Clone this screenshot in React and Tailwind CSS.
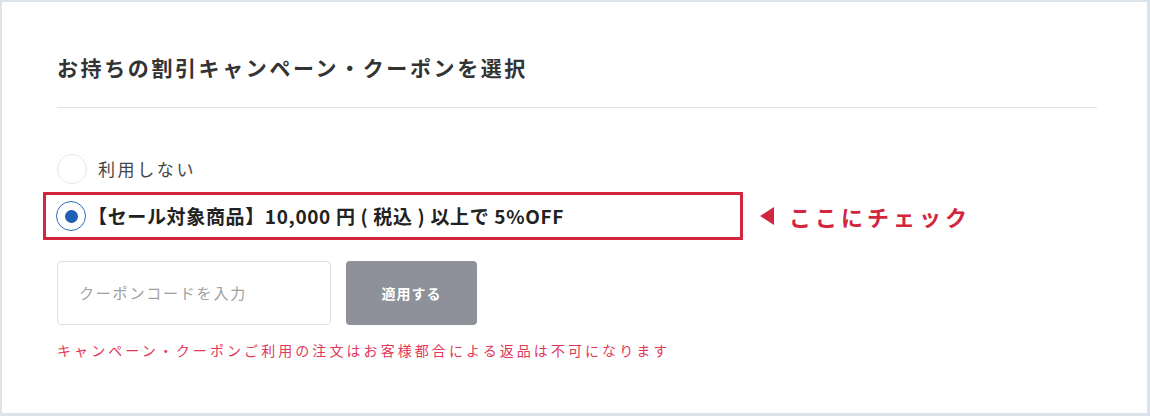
export default function App() {
  const font = { fontFamily: '"Noto Sans CJK JP", "Noto Sans", sans-serif' };
  return (
    <div
      style={font}
      className="w-[1150px] h-[416px] bg-white border-solid border-[#dce3eb] border-t-2 border-l-2 border-r-[3px] border-b-[3px] pl-[55px] pr-[50px] pt-[51px]"
    >
      <h2 className="text-[21px] leading-[28px] font-bold tracking-[2.6px] text-[#333]">
        お持ちの割引キャンペーン・クーポンを選択
      </h2>
      <div className="mt-[26px] h-px bg-[#dfe3e8]" />

      <div className="mt-[46px] flex items-center h-[30px]">
        <span className="w-[30px] h-[30px] rounded-full border border-[#e3e6ea] bg-white shrink-0" />
        <span className="ml-[11px] text-[17px] leading-[24px] tracking-[2.6px] text-[#444]">利用しない</span>
      </div>

      <div className="mt-[8px] flex items-center">
        <div className="ml-[-14px] w-[700px] h-[48px] border-[3px] border-[#d4253f] flex items-center pl-[10px]">
          <span className="w-[30px] h-[30px] rounded-full border border-[#2e6bb8] bg-white shrink-0 flex items-center justify-center">
            <span className="w-[13px] h-[13px] rounded-full bg-[#1f5fb4]" />
          </span>
          <span className="ml-[2px] text-[19px] leading-[26px] font-bold tracking-[0.65px] text-[#222]">
            【セール対象商品】10,000 円 ( 税込 ) 以上で 5%OFF
          </span>
        </div>
        <svg className="ml-[17px]" width="14" height="18" viewBox="0 0 14 18">
          <polygon points="0,9 14,0 14,18" fill="#d4253f" />
        </svg>
        <span className="ml-[15px] text-[22px] leading-[30px] font-bold tracking-[4px] text-[#d4253f]">
          ここにチェック
        </span>
      </div>

      <div className="mt-[21px] flex gap-[15px]">
        <div className="w-[274px] h-[64px] rounded-[4px] border border-[#dde1e6] flex items-center pl-[21px] text-[15px] tracking-[1.8px] text-[#a0a0a0]">
          クーポンコードを入力
        </div>
        <div className="w-[131px] h-[64px] rounded-[4px] bg-[#8e9199] flex items-center justify-center text-[14px] font-bold tracking-[1px] text-white">
          適用する
        </div>
      </div>

      <p className="mt-[15px] text-[14px] leading-[20px] tracking-[3.07px] text-[#e2375a]">
        キャンペーン・クーポンご利用の注文はお客様都合による返品は不可になります
      </p>
    </div>
  );
}
